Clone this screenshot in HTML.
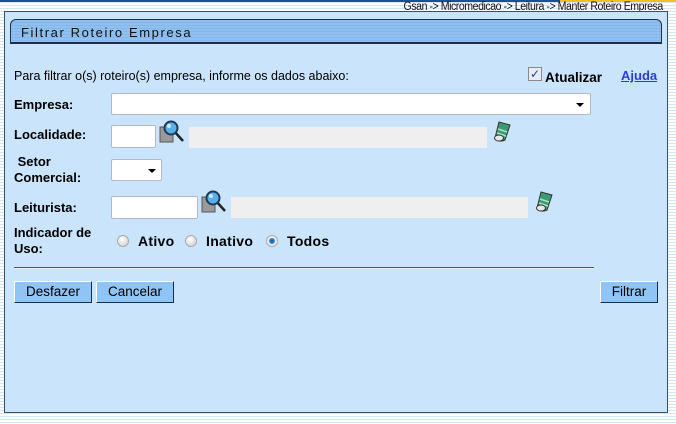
<!DOCTYPE html>
<html><head><meta charset="utf-8"><style>
body{margin:0;width:676px;height:424px;overflow:hidden;position:relative;font-family:"Liberation Sans",sans-serif;background:repeating-linear-gradient(180deg,#fff 0,#fff 2px,#d5e6f3 2px,#d5e6f3 3px)}
.a{position:absolute}
.panel{left:4px;top:11px;width:662px;height:400px;background:#cae4fc;border:1px solid #34506a}
.hdr{left:10px;top:19px;width:652px;height:25px;background:repeating-linear-gradient(180deg,#8fc0f0 0,#8fc0f0 2px,#84b6ea 2px,#84b6ea 3px);border:1px solid #1d2f48;border-bottom-width:2px;border-radius:6px 6px 0 0;font-size:13px;letter-spacing:1.6px;color:#111;line-height:25px;padding-left:10px;box-sizing:border-box}
.lbl{font-size:13px;font-weight:bold;color:#000;line-height:15px}
.inp{background:#fff;border:1px solid #b4b8c0;border-radius:2px;box-sizing:border-box}
.dis{background:#efefef}
.btn{background:#8fc4f6;border:1px solid #fff;border-right-color:#1a2a50;border-bottom-color:#1a2a50;font-size:13.5px;text-align:center;line-height:19px;box-sizing:border-box;height:22px}
.arr{width:0;height:0;border-left:4px solid transparent;border-right:4px solid transparent;border-top:4px solid #000}
.rad{width:10px;height:10px;border-radius:50%;background:radial-gradient(circle at 40% 35%,#fff,#c8c8c8);border:1px solid #aaa}
</style></head><body>
<div class="a" style="left:0;top:0;width:676px;height:2px;background:#1f4f8f"></div>
<div class="a" style="left:560px;top:0;width:116px;height:2px;background:#f0c020"></div>
<div class="a" style="right:13px;top:2px;font-size:11.5px;line-height:11px;color:#111;letter-spacing:-0.5px;transform:scaleX(0.92);transform-origin:right">Gsan -&gt; Micromedicao -&gt; Leitura -&gt; Manter Roteiro Empresa</div>
<div class="a panel"></div>
<div class="a hdr">Filtrar Roteiro Empresa</div>
<div class="a" style="left:14px;top:69px;font-size:12.5px">Para filtrar o(s) roteiro(s) empresa, informe os dados abaixo:</div>
<div class="a" style="left:528px;top:67px;width:12px;height:12px;border:1px solid #8a8a8a;background:#e4ecf4;font-size:12px;line-height:12px;text-align:center;color:#2a3a9a">✓</div>
<div class="a lbl" style="left:545px;top:70px;font-size:13.5px">Atualizar</div>
<div class="a" style="left:621px;top:68px;font-size:13px;font-weight:bold;color:#2a3fcf;text-decoration:underline">Ajuda</div>

<div class="a lbl" style="left:14px;top:97px">Empresa:</div>
<div class="a inp" style="left:111px;top:93px;width:480px;height:22px"><div class="a arr" style="right:6px;top:9px"></div></div>

<div class="a lbl" style="left:14px;top:127px">Localidade:</div>
<div class="a inp" style="left:111px;top:125px;width:45px;height:23px"></div>
<svg class="a" style="left:159px;top:120px" width="27" height="24" viewBox="0 0 27 24"><rect x="1" y="7" width="13" height="15" fill="#9a9a9a" stroke="#555"/><line x1="15" y1="11" x2="24" y2="21" stroke="#222" stroke-width="2.5"/><circle cx="12" cy="8" r="6.5" fill="#5ab0e8" stroke="#1d3a5a" stroke-width="2"/><circle cx="10" cy="6" r="2" fill="#cfeaff"/></svg>
<div class="a dis" style="left:189px;top:127px;width:298px;height:21px"></div>
<svg class="a" style="left:491px;top:120px" width="22" height="24" viewBox="0 0 22 24"><path d="M8 2 L19 5 L14 20 Q8 23 4 18 Z" fill="#3c9a72" stroke="#333"/><path d="M7 9 L16 12 M6 13 L15 16" stroke="#a8e0c8" stroke-width="1.5"/><ellipse cx="8" cy="18" rx="4.5" ry="3" fill="#e8e8e8" stroke="#333"/></svg>

<div class="a lbl" style="left:14px;top:154px;line-height:16px">&nbsp;Setor<br>Comercial:</div>
<div class="a inp" style="left:111px;top:159px;width:51px;height:22px"><div class="a arr" style="right:5px;top:9px"></div></div>

<div class="a lbl" style="left:14px;top:200px">Leiturista:</div>
<div class="a inp" style="left:111px;top:196px;width:87px;height:23px"></div>
<svg class="a" style="left:201px;top:190px" width="27" height="24" viewBox="0 0 27 24"><rect x="1" y="7" width="13" height="15" fill="#9a9a9a" stroke="#555"/><line x1="15" y1="11" x2="24" y2="21" stroke="#222" stroke-width="2.5"/><circle cx="12" cy="8" r="6.5" fill="#5ab0e8" stroke="#1d3a5a" stroke-width="2"/><circle cx="10" cy="6" r="2" fill="#cfeaff"/></svg>
<div class="a dis" style="left:231px;top:197px;width:297px;height:21px"></div>
<svg class="a" style="left:533px;top:190px" width="22" height="24" viewBox="0 0 22 24"><path d="M8 2 L19 5 L14 20 Q8 23 4 18 Z" fill="#3c9a72" stroke="#333"/><path d="M7 9 L16 12 M6 13 L15 16" stroke="#a8e0c8" stroke-width="1.5"/><ellipse cx="8" cy="18" rx="4.5" ry="3" fill="#e8e8e8" stroke="#333"/></svg>

<div class="a lbl" style="left:14px;top:225px;line-height:16px">Indicador de<br>Uso:</div>
<div class="a rad" style="left:117px;top:235px"></div>
<div class="a lbl" style="left:138px;top:234px;font-size:14px;letter-spacing:0.3px">Ativo</div>
<div class="a rad" style="left:185px;top:235px"></div>
<div class="a lbl" style="left:206px;top:234px;font-size:14px;letter-spacing:0.3px">Inativo</div>
<div class="a rad" style="left:266px;top:235px;background:radial-gradient(circle,#0a5a9a 0,#3a8ad0 2.5px,#f0f0f0 3.5px)"></div>
<div class="a lbl" style="left:287px;top:234px;font-size:14px;letter-spacing:0.3px">Todos</div>

<div class="a" style="left:14px;top:267px;width:580px;height:1px;background:#555;border-bottom:1px solid #eef"></div>

<div class="a btn" style="left:14px;top:281px;width:78px">Desfazer</div>
<div class="a btn" style="left:96px;top:281px;width:78px">Cancelar</div>
<div class="a btn" style="left:600px;top:281px;width:58px">Filtrar</div>
</body></html>
